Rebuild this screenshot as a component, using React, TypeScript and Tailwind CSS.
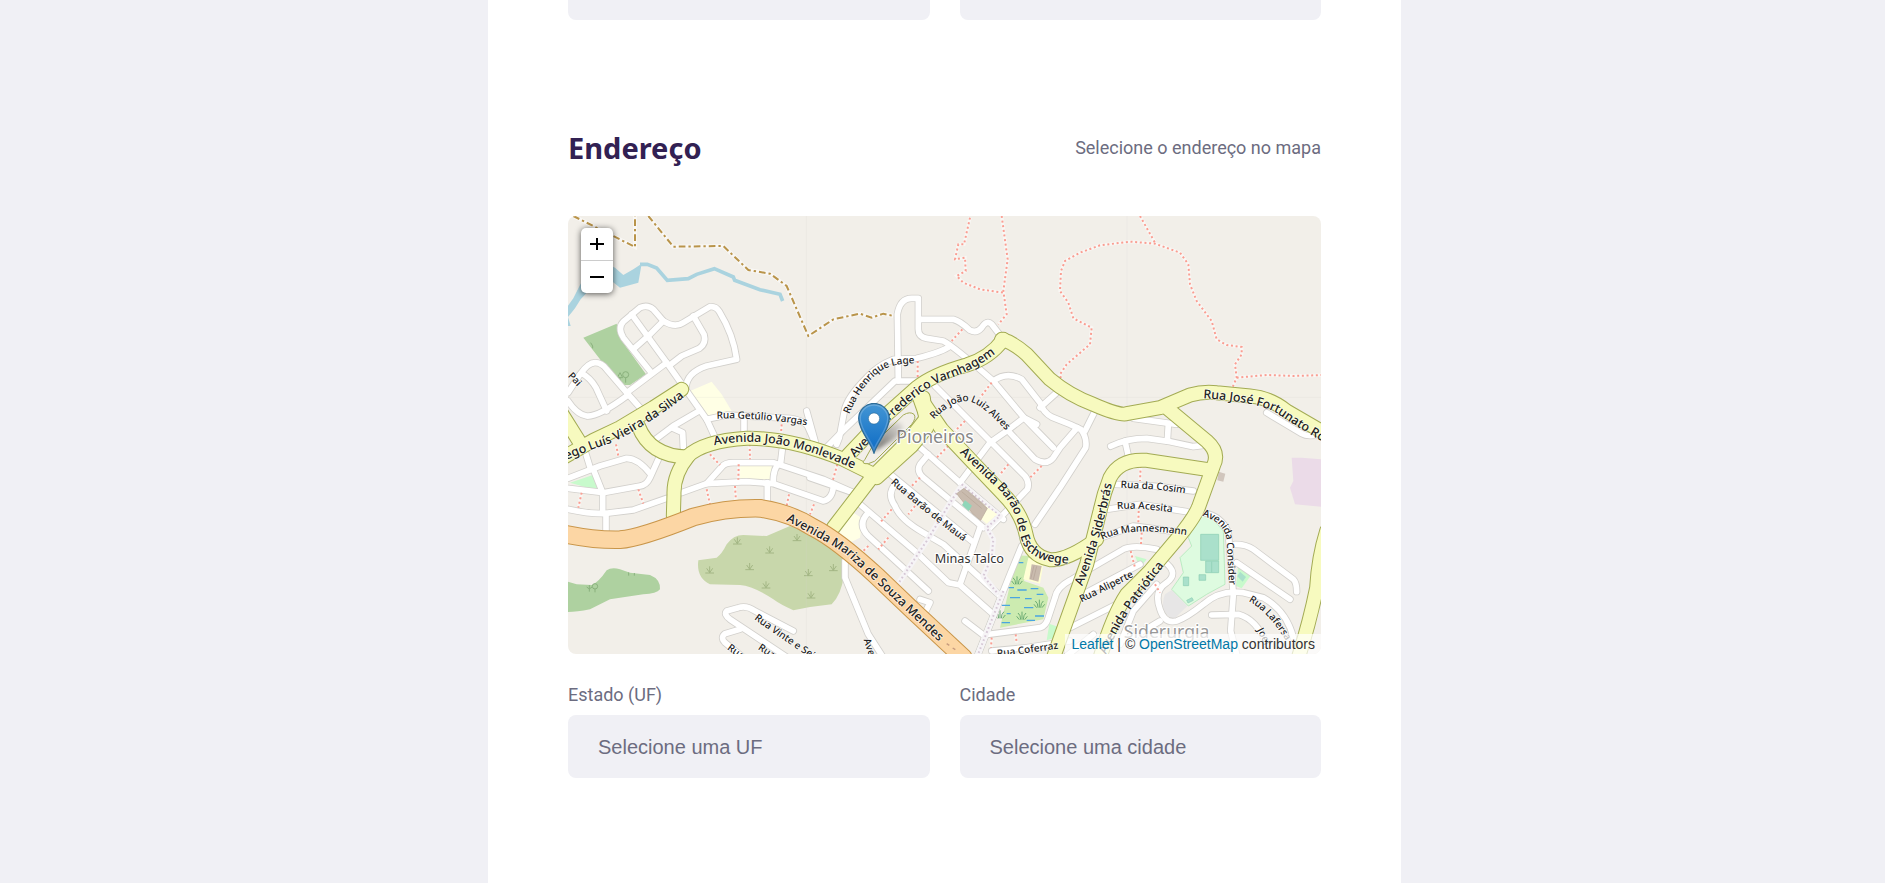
import type { ReactNode } from "react";

const MINOR: string[] = [
  "M270 480L190 380Q172 350 190 332L240 290Q262 280 280 295L310 330Q345 352 370 335L450 287Q468 285 478 302Q520 370 530 445L440 465Q380 485 378 530",
  "M215 310L320 455",
  "M310 330L268 372L225 410",
  "M400 315L432 370Q440 398 418 412L365 435L330 462",
  "M200 545L320 455L440 625L470 690",
  "M24 545L60 490Q85 455 105 455Q125 455 140 475L200 545L240 590",
  "M65 487Q90 500 108 530L140 600",
  "M24 570Q50 610 80 615Q115 618 200 555",
  "M280 690L340 645L420 598",
  "M440 625L500 612L690 622Q740 630 745 650L765 695",
  "M335 650L368 665L370 710",
  "M552 620L552 670",
  "M75 720L92 775",
  "M24 802L120 765L200 742Q235 742 272 790",
  "M297 740L270 800Q260 822 240 825L130 845L24 832",
  "M100 775L128 845L128 905",
  "M24 895Q80 908 130 908L220 897L320 862",
  "M138 908L138 960",
  "M440 818L485 768Q495 755 520 755L640 755L790 805L880 845",
  "M365 845L440 818L560 812L640 818L790 870Q815 865 820 830",
  "M668 705L662 755Q638 770 640 815",
  "M622 815L622 872",
  "M700 1260L585 1200Q560 1182 535 1190L500 1200Q490 1210 510 1225L690 1345",
  "M540 1255L495 1268Q480 1280 495 1295L550 1340",
  "M1015 510L1012 310Q1020 262 1055 262L1075 262L1075 355Q1075 378 1100 382L1150 390Q1180 405 1300 510L1392 620L1480 710",
  "M1080 325L1180 325Q1200 330 1230 358Q1250 368 1265 350Q1280 325 1295 340L1318 370",
  "M1170 405Q1150 422 1070 442L1000 445Q950 465 920 500Q860 560 853 600L838 680L830 700",
  "M1075 510L1005 510L850 658L780 730",
  "M740 600L765 690",
  "M1300 510Q1340 480 1385 505L1440 575Q1450 605 1475 618L1530 640L1562 655Q1582 680 1577 710L1500 830L1425 940",
  "M1605 600L1575 660",
  "M1552 650L1500 710L1480 740Q1460 765 1425 745L1340 655",
  "M1490 545L1440 590",
  "M1430 640L1392 620L1340 660L1290 695L1200 815",
  "M1125 525L1290 690L1395 795Q1410 815 1402 835L1340 900L1290 950",
  "M1720 622L1850 640",
  "M1825 640L1822 690",
  "M1652 706Q1700 682 1760 682L1830 692L1900 707L1930 703",
  "M1695 690L1705 735",
  "M2120 605L2225 668Q2245 680 2290 668",
  "M1070 700L1200 815L1330 925",
  "M1105 730L1080 760Q1068 780 1090 800L1180 875L1270 950",
  "M985 785L1235 990",
  "M1005 820Q980 850 1005 885Q1020 925 1090 965L1150 1000L1315 1150",
  "M900 880L1070 1025L1165 1115L1200 1122L1300 1210",
  "M925 905Q890 940 925 975L1040 1080L1105 1140",
  "M1260 950L1200 1120",
  "M1080 1165L1110 1175L1095 1205",
  "M1385 1005L1350 1090L1250 1340",
  "M1215 1230L1270 1272L1440 1250Q1458 1245 1465 1220L1485 1160Q1490 1130 1530 1108L1690 1015Q1720 1000 1790 1015",
  "M855 1050L855 1100L925 1270L970 1340",
  "M1295 1320L1400 1310L1530 1290",
  "M750 800L880 845",
  "M1665 820L1780 825L1900 840",
  "M1640 895L1740 880L1880 902",
  "M1610 985L1720 945L1870 965",
  "M1550 1160L1740 1060",
  "M1530 1250L1670 1180",
  "M1520 1335L1600 1270",
  "M1810 1050Q1860 1085 1820 1115Q1780 1140 1800 1195Q1815 1240 1850 1230Q1880 1220 1930 1180Q1980 1135 2050 1145L2110 1160Q2180 1200 2200 1280",
  "M2025 1000Q2060 1000 2080 1015L2200 1105Q2210 1115 2210 1142",
  "M2030 1055L2190 1165",
  "M1930 905Q1985 915 2005 965L2020 1150L2012 1260L2030 1330",
  "M1955 1212L2035 1210Q2090 1225 2120 1300",
  "M1790 1120L1720 1200L1680 1300",
  "M1800 1230L1700 1290",
];

const PEDESTRIAN: string[] = [
  "M1205 825L1180 860L1100 990L1010 1125",
  "M1205 820L1320 915L1280 950L1300 985L1295 1040L1270 1095L1315 1150",
  "M1330 1140L1250 1340",
];

const SECONDARY: string[] = [
  "M365 535L280 590L180 650L100 688L0 745",
  "M0 600L60 695",
  "M235 645Q270 735 380 738Q430 690 560 682Q690 680 850 745L930 785",
  "M385 735Q340 790 342 850L340 915",
  "M1330 385Q1290 440 1220 462Q1120 490 1070 530L980 610L862 735",
  "M1072 540L1100 620L1045 690L935 800L820 950",
  "M1090 560L1100 650L1055 705L950 800",
  "M1080 560L1145 655L1230 745L1330 850Q1385 905 1398 970Q1410 1035 1470 1046Q1520 1050 1610 985",
  "M1325 385Q1360 395 1400 430L1470 505Q1530 555 1600 580Q1680 615 1700 608L1800 590L1890 552Q1930 540 1970 545L2070 555Q2130 560 2180 600L2300 670",
  "M1820 590L1940 690Q1980 725 1960 765L1915 890Q1900 925 1850 985L1770 1080L1700 1150Q1660 1210 1620 1340",
  "M1940 775L1760 748Q1680 742 1650 800Q1630 850 1620 900L1580 1060L1480 1340",
  "M2300 960Q2275 1040 2270 1130Q2250 1230 2215 1340",
];

const PRIMARY = "M0 966Q100 988 180 986Q240 982 400 918Q500 890 600 892Q690 905 760 950Q830 985 950 1095L1060 1200L1210 1340";

const FOOTPATHS: string[] = [
  "M1230 20L1212 100L1195 100L1185 145L1215 140L1217 180L1190 195L1210 215L1260 235L1330 245",
  "M1325 15L1343 145L1330 240L1340 310L1315 340",
  "M1207 355L1175 390",
  "M1073 450L1073 505",
  "M1295 515L1260 560",
  "M1215 630L1185 660",
  "M1740 15L1785 95",
  "M1505 515L1500 490L1520 460L1590 400L1595 350L1540 322L1525 275L1500 240L1503 180L1515 150L1560 125L1620 103L1710 92L1785 98L1860 125L1885 160L1890 220L1910 270L1955 330L1970 385L2000 402L2045 408L2045 430L2025 460L2030 500L2015 535",
  "M2030 500L2120 492L2200 495L2290 492",
  "M1742 765L1740 810M1736 900L1735 935M1745 965L1743 1000M1712 1020L1725 1070M1785 1120L1800 1145",
  "M168 700L175 735M65 845L55 890M235 835L250 878M440 835L450 880M525 825L528 872M536 760L535 806M569 700L570 745M687 850L680 885M450 730L480 762M665 640L663 668M762 880L750 910",
  "M832 760L818 810M1165 705L1130 740M1080 800L1055 825M995 895L960 935M985 980L955 1015M1065 885L1045 910M925 1005L905 1025M1345 760L1320 790M1445 765L1410 800M1295 1280L1293 1310M1367 1270L1370 1295",
];

const TRACK =
  "M40 15L225 108L225 15M265 15L340 107L490 105L565 177L630 188L680 225L745 375L820 325L900 308L935 320L970 308L1000 315";

type RoadLabel = { id: string; d: string; size: 30 | 37; text: string; end?: boolean };

const ROAD_LABELS: RoadLabel[] = [
  { id: "silva", d: "M-86 790Q70 715 150 692Q260 640 370 554", size: 37, text: "Diego Luís Vieira da Silva", end: true },
  { id: "monlevade", d: "M462 698Q580 675 690 702Q790 725 930 790", size: 37, text: "Avenida João Monlevade" },
  { id: "varnhagem", d: "M885 732L985 625Q1070 540 1140 506Q1230 480 1304 424", size: 37, text: "Avenida Frederico Varnhagem", end: true },
  { id: "eschwege", d: "M1202 722L1320 832Q1372 885 1385 970Q1402 1060 1560 1052", size: 37, text: "Avenida Barão de Eschwege" },
  { id: "fortunato", d: "M1930 557Q2080 565 2150 600Q2220 650 2400 750", size: 37, text: "Rua José Fortunato Rocha" },
  { id: "mariza", d: "M680 925Q800 985 860 1025Q1010 1165 1200 1345", size: 37, text: "Avenida Mariza de Souza Mendes" },
  { id: "siderbras", d: "M1562 1124Q1630 950 1655 790L1662 740", size: 37, text: "Avenida Siderbrás" },
  { id: "patriotica", d: "M1615 1370Q1680 1220 1740 1150L1808 1060", size: 37, text: "Avenida Patriótica", end: true },
  { id: "getulio", d: "M470 618Q600 612 780 645", size: 30, text: "Rua Getúlio Vargas" },
  { id: "lage", d: "M863 608Q900 520 960 475Q1000 450 1080 452", size: 30, text: "Rua Henrique Lage" },
  { id: "alves", d: "M1118 622Q1190 550 1240 570Q1280 585 1370 685", size: 30, text: "Rua João Luiz Alves" },
  { id: "maua", d: "M995 812Q1100 905 1260 1022", size: 30, text: "Rua Barão de Mauá" },
  { id: "cosim", d: "M1682 825L1790 830L1930 850", size: 30, text: "Rua da Cosim" },
  { id: "acesita", d: "M1672 890Q1740 882 1900 908", size: 30, text: "Rua Acesita" },
  { id: "mannesmann", d: "M1624 982Q1720 935 1920 975", size: 30, text: "Rua Mannesmann" },
  { id: "consider", d: "M1928 910Q2000 930 2005 990L2014 1150", size: 30, text: "Avenida Consider" },
  { id: "aliperte", d: "M1562 1170L1760 1072", size: 30, text: "Rua Aliperte" },
  { id: "lafersa", d: "M2068 1166Q2140 1205 2200 1320", size: 30, text: "Rua Lafersa" },
  { id: "coferraz", d: "M1312 1333L1540 1302", size: 30, text: "Rua Coferraz" },
  { id: "vinte", d: "M585 1220Q680 1290 800 1365", size: 30, text: "Rua Vinte e Seis" },
  { id: "south-a", d: "M595 1310L700 1380", size: 30, text: "Rua" },
  { id: "south-b", d: "M503 1310L600 1380", size: 30, text: "Rua" },
  { id: "south-c", d: "M915 1285L960 1420", size: 30, text: "Avenida" },
  { id: "pai", d: "M26 492L90 560", size: 30, text: "Pai" },
  { id: "joel", d: "M2095 1255L2140 1340", size: 30, text: "Joel" },
];

const SCRUB: [number, number][] = [
  [532, 990], [629, 1017], [711, 980], [449, 1077], [569, 1067], [618, 1122], [745, 1085], [753, 1152], [820, 1070],
];

const REEDS: [number, number][] = [[1371, 1110], [1438, 1180], [1320, 1212], [1386, 1216]];

function Roads({ paths, casing, fill, outer, inner }: { paths: string[]; casing: string; fill: string; outer: number; inner: number }) {
  return (
    <g fill="none" strokeLinejoin="round" strokeLinecap="round">
      <g stroke={casing} strokeWidth={outer}>
        {paths.map((d) => <path key={d} d={d} />)}
      </g>
      <g stroke={fill} strokeWidth={inner}>
        {paths.map((d) => <path key={d} d={d} />)}
      </g>
    </g>
  );
}

function StreetMap() {
  return (
    <svg
      viewBox="24 15 2259 1314"
      preserveAspectRatio="xMidYMid slice"
      className="block h-full w-full"
      fontFamily="'Noto Sans', 'Open Sans', sans-serif"
      role="img"
      aria-label="Mapa do bairro Pioneiros"
    >
      <rect width="2400" height="1400" fill="#f2efe9" />

      <path d="M70 380L170 338L182 385L258 490L210 522L180 522Z" fill="#aed1a0" />
      <g fill="none" stroke="#8ab17d" strokeWidth="3">
        <circle cx="197" cy="491" r="9" />
        <path d="M197 500V515M180 485L172 500H188ZM180 500V512M92 395L98 405V412" />
      </g>
      <path d="M385 542L455 512L485 550L515 600L440 615Z" fill="#ffffe5" />
      <path d="M30 815L105 790L118 840Z" fill="#c8facc" />
      <path d="M24 1112L50 1120L95 1122Q115 1115 140 1078Q155 1068 180 1075L210 1085L270 1092Q302 1105 300 1135Q290 1148 250 1150L150 1165L90 1195Q50 1203 24 1203Z" fill="#aed1a0" />
      <g fill="none" stroke="#8ab17d" strokeWidth="3">
        <circle cx="105" cy="1126" r="8" />
        <path d="M105 1134V1144M88 1122V1142M80 1128L88 1134L96 1128M206 1084V1094M223 1086V1094" />
      </g>
      <path d="M415 1048L470 1040Q485 1030 500 1000Q520 972 550 972L620 975L690 945L860 1010L852 1090Q845 1150 815 1180L750 1188L700 1198Q660 1180 640 1165Q580 1125 540 1122L450 1120Q408 1100 415 1048Z" fill="#c8d7ab" />
      <g fill="none" stroke="#a3b684" strokeWidth="3">
        {SCRUB.map(([x, y]) => (
          <path key={`${x}-${y}`} d={`M${x - 13} ${y + 9}H${x + 13}M${x} ${y + 9}V${y - 11}M${x} ${y + 8}L${x - 9} ${y - 5}M${x} ${y + 8}L${x + 9} ${y - 5}`} />
        ))}
      </g>
      <path d="M838 965L880 905L907 922L900 980L875 992Z" fill="#ffffe5" />
      <path d="M1370 1033L1410 1035L1392 1110L1450 1130L1465 1160L1450 1225L1320 1250L1340 1165Z" fill="#ccebb0" />
      <path d="M1405 1040L1450 1060L1440 1118L1390 1105Z" fill="#ffffd5" />
      <path d="M1415 1060L1445 1065L1435 1112L1408 1105Z" fill="#c9bbae" />
      <path d="M1422 1064L1412 1104M1430 1066L1420 1106" stroke="#b3a296" strokeWidth="2" />
      <path d="M1365 1055H1390M1342 1130H1362M1372 1137H1400M1412 1133H1435M1350 1160H1380M1395 1163H1415M1325 1183H1350M1392 1190H1420M1430 1150H1450M1340 1208H1352M1425 1215H1452M1400 1228H1425M1325 1235H1350" stroke="#4aa5e0" strokeWidth="4" />
      <g fill="none" stroke="#6bab72" strokeWidth="3">
        {REEDS.map(([x, y]) => (
          <path key={`${x}-${y}`} d={`M${x} ${y + 10}V${y - 14}M${x - 4} ${y + 10}Q${x - 4} ${y - 4} ${x - 12} ${y - 10}M${x + 4} ${y + 10}Q${x + 4} ${y - 4} ${x + 12} ${y - 10}M${x - 8} ${y + 10}L${x - 16} ${y}M${x + 8} ${y + 10}L${x + 16} ${y}`} />
        ))}
      </g>
      <path d="M1468 1238L1495 1248L1485 1280L1460 1288Z" fill="#c8facc" />
      <path d="M1925 900L1955 920L1990 960L1995 1120L1940 1150L1885 1185L1835 1135L1870 1085L1860 1040L1895 1005L1885 980Z" fill="#defbe0" stroke="#a5e6b0" strokeWidth="2" />
      <g fill="#aae0cb" stroke="#8bcdb2" strokeWidth="2">
        <path d="M1922 970H1976V1048H1922ZM1937 1050H1976V1085H1937ZM1917 1091H1937V1108H1917ZM1870 1098H1886V1124H1870Z" />
        <path d="M1955 1052V1084M1880 1168L1896 1160L1900 1168L1884 1176Z" />
      </g>
      <path d="M1835 1137L1882 1185L1840 1226Q1795 1200 1815 1150Z" fill="#e7e6e6" />
      <path d="M1725 1035L1760 1045L1740 1070Z" fill="#c8facc" />
      <path d="M2035 1060L2075 1090L2045 1132L2028 1125Z" fill="#c8facc" />
      <path d="M2040 1082L2058 1098L2048 1112L2032 1096Z" fill="#aae0cb" />
      <path d="M2195 740H2225L2290 745V888L2205 880L2190 830L2200 810Z" fill="#ebdbe8" />
      <path d="M1976 782L1996 788L1990 812L1972 808Z" fill="#d1c6bd" />
      <path d="M540 758L635 760L632 806L540 804Z" fill="#ffffe5" />

      <path d="M20 290L40 262L62 218L110 170L135 155L165 170L190 192L220 175L245 158L235 215L180 230L155 210L90 235L62 265L45 292L24 318L32 345H20Z" fill="#aad3df" />
      <path d="M240 160L262 160L290 171L322 208L385 203L410 190L463 173L520 198L524 208L600 236L660 250L668 270" fill="none" stroke="#aad3df" strokeWidth="11" />
      <path d="M739 15V1329M1701 15V1329M24 559H2283" stroke="#d8d5d2" strokeOpacity=".3" strokeWidth="2" />

      <path d={TRACK} fill="none" stroke="#fff" strokeOpacity=".5" strokeWidth="12" />
      <path d={TRACK} fill="none" stroke="#b9944a" strokeWidth="6" strokeDasharray="20 9 7 9" />
      <g fill="none" stroke="#fff" strokeOpacity=".5" strokeWidth="10">
        {FOOTPATHS.map((d) => <path key={d} d={d} />)}
      </g>

      <Roads paths={MINOR} casing="#d2d0cc" fill="#fff" outer={22} inner={17} />
      <g fill="none" stroke="#fa9e92" strokeWidth="6" strokeDasharray="6 8">
        {FOOTPATHS.map((d) => <path key={d} d={d} />)}
      </g>
      <g fill="none" strokeLinejoin="round">
        {PEDESTRIAN.map((d) => (
          <g key={d}>
            <path d={d} stroke="#f6f4f6" strokeWidth="17" />
            <path d={d} stroke="#c8b4c8" strokeWidth="6" strokeDasharray="5 8" strokeOpacity=".7" />
          </g>
        ))}
      </g>
      <path d="M1255 870L1312 910L1280 938L1235 900Z" fill="#ffffe0" />
      <path d="M1190 848L1212 832L1282 892L1262 928L1238 908Z" fill="#c9bbae" stroke="#b5a496" strokeWidth="2" />
      <path d="M1215 868L1236 884L1226 900L1206 882Z" fill="#8fd6b9" />
      <path d="M1205 842L1265 892M1222 838L1276 884" stroke="#b5a496" strokeWidth="2" />

      <Roads paths={SECONDARY} casing="#a3ab54" fill="#f7fabf" outer={45} inner={39} />
      <Roads paths={[PRIMARY]} casing="#c9964a" fill="#fcd6a4" outer={56} inner={50} />
      <path d="M1160 1298l8 5m10 8l8 5" stroke="#c79b7e" strokeWidth="4" />
      <path d="M915 745L940 700L1030 612Q1050 600 1062 610Q1070 620 1055 640L960 735Q945 755 925 758Q900 760 915 745Z" fill="#f2efe9" stroke="#a3ab54" strokeWidth="3" />

      <g fill="#222" stroke="#fff" strokeOpacity=".6" strokeWidth="5" strokeLinejoin="round" paintOrder="stroke" fontWeight="500">
        {ROAD_LABELS.map(({ id, d, size, text, end }) => (
          <g key={id}>
            <path id={`road-${id}`} d={d} fill="none" stroke="none" />
            <text fontSize={size} dy="5" textAnchor={end ? "end" : "start"}>
              <textPath href={`#road-${id}`} startOffset={end ? "100%" : "0"}>{text}</textPath>
            </text>
          </g>
        ))}
      </g>
      <g stroke="#fff" strokeWidth="7" strokeLinejoin="round" paintOrder="stroke" textAnchor="middle">
        <text x="1228" y="1055" fontSize="38" fill="#333">Minas Talco</text>
        <text x="1125" y="695" fontSize="53" fill="#888">Pioneiros</text>
        <text x="1820" y="1280" fontSize="53" fill="#999">Siderurgia</text>
      </g>
    </svg>
  );
}

function Marker() {
  return (
    <svg viewBox="0 0 64 51" className="absolute top-[187px] left-[calc(50%_-_87px)] h-[51px] w-16" role="img" aria-label="Local selecionado">
      <defs>
        <linearGradient id="pin-fill" x1="0" y1="0" x2="0" y2="1">
          <stop offset="0" stopColor="#4496d4" />
          <stop offset=".9" stopColor="#126fc6" />
        </linearGradient>
        <linearGradient id="pin-shadow" x1="0" y1="1" x2="1" y2="0">
          <stop offset="0" stopColor="#000" stopOpacity=".6" />
          <stop offset="1" stopColor="#000" stopOpacity=".05" />
        </linearGradient>
        <filter id="pin-blur"><feGaussianBlur stdDeviation="2" /></filter>
      </defs>
      <path d="M15 49L26 27Q38 15 44 21Q48 29 34 38Z" fill="url(#pin-shadow)" filter="url(#pin-blur)" />
      <path d="M16 50C13 40 .7 27 .7 15.500A15.300 15 0 0 1 31.300 15.500C31.300 27 19 40 16 50Z" fill="url(#pin-fill)" stroke="#2e6c97" strokeWidth="1.300" />
      <path d="M16 46.500C12.500 37 2.200 26 2.200 15.500A13.800 13.500 0 0 1 29.800 15.500C29.800 26 19.500 37 16 46.500Z" fill="none" stroke="#fff" strokeOpacity=".2" strokeWidth="1.400" />
      <circle cx="16" cy="15.500" r="5.600" fill="#fff" stroke="#2e6c97" strokeOpacity=".6" />
    </svg>
  );
}

function Field({ id, label, children }: { id: string; label: string; children: ReactNode }) {
  return (
    <div className="flex flex-1 flex-col">
      <label htmlFor={id} className="mb-2 text-lg leading-6">{label}</label>
      {children}
    </div>
  );
}

const control =
  "h-[63px] w-full appearance-none rounded-lg bg-[#f0f0f5] px-[30px] font-['Liberation_Sans',sans-serif] text-xl text-[#6c6c80] outline-none";

export default function App() {
  return (
    <div className="flex min-h-screen justify-center bg-[#f0f0f5] pl-1 font-['Roboto',sans-serif] text-[#6c6c80]">
      <form className="min-h-screen w-full max-w-[913px] bg-white px-20">
        <div className="flex h-5 items-end gap-[30px] overflow-hidden">
          <input type="email" aria-label="E-mail" className={control} />
          <input type="tel" aria-label="Whatsapp" className={control} />
        </div>

        <fieldset className="mt-20 pb-20">
          <div className="mt-7 mb-12 flex h-10 items-center justify-between">
            <h2 className="font-['Noto_Sans',sans-serif] text-[29px] font-bold text-[#322153]">Endereço</h2>
            <span className="text-lg leading-6">Selecione o endereço no mapa</span>
          </div>

          <div className="relative h-[438px] overflow-hidden rounded-lg">
            <StreetMap />
            <Marker />
            <div className="absolute top-3 left-[13px] flex flex-col overflow-hidden rounded-[5px] bg-white text-black shadow-[0_1px_6px_rgba(0,0,0,0.65)]">
              <button type="button" aria-label="Aproximar" className="flex h-8 w-8 items-center justify-center">
                <svg viewBox="0 0 14 14" className="h-[14px] w-[14px]" stroke="currentColor" strokeWidth="2"><path d="M0 7H14M7 1V13" /></svg>
              </button>
              <button type="button" aria-label="Afastar" className="flex h-[33px] w-8 items-center justify-center border-t border-[#ccc]">
                <svg viewBox="0 0 14 14" className="h-[14px] w-[14px]" stroke="currentColor" strokeWidth="2"><path d="M0 7H14" /></svg>
              </button>
            </div>
            <div className="absolute right-0 bottom-0 bg-white/70 px-[6px] font-['Liberation_Sans',sans-serif] text-sm leading-5 text-[#333]">
              <a href="#leaflet" className="text-[#0078a8]">Leaflet</a> | © <a href="#openstreetmap" className="text-[#0078a8]">OpenStreetMap</a> contributors
            </div>
          </div>

          <div className="mt-[29px] flex gap-[30px]">
            <Field id="uf" label="Estado (UF)">
              <select id="uf" className={control}><option>Selecione uma UF</option></select>
            </Field>
            <Field id="city" label="Cidade">
              <select id="city" className={control}><option>Selecione uma cidade</option></select>
            </Field>
          </div>
        </fieldset>
      </form>
    </div>
  );
}
